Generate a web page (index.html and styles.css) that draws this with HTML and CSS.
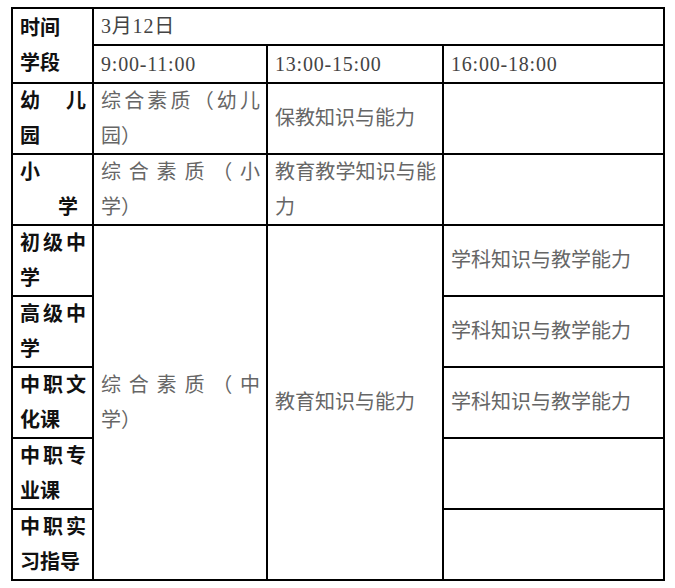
FILE: index.html
```html
<!DOCTYPE html>
<html lang="zh-CN">
<head>
<meta charset="utf-8">
<title>考试时间安排</title>
<link rel="stylesheet" href="styles.css">
</head>
<body>
<table class="exam">
  <colgroup>
    <col class="c1"><col class="c2"><col class="c3"><col class="c4">
  </colgroup>
  <tr class="rh1">
    <td rowspan="2" class="head">时间<br>学段</td>
    <td colspan="3" class="time">3月12日</td>
  </tr>
  <tr class="rh2">
    <td class="time">9:00-11:00</td>
    <td class="time">13:00-15:00</td>
    <td class="time">16:00-18:00</td>
  </tr>
  <tr class="row">
    <td class="head">幼 儿 园</td>
    <td class="subj">综合素质（幼儿园）</td>
    <td class="subj">保教知识与能力</td>
    <td></td>
  </tr>
  <tr class="row">
    <td class="head">小<br><span class="xue">学</span></td>
    <td class="subj">综合素质（小学）</td>
    <td class="subj">教育教学知识与能力</td>
    <td></td>
  </tr>
  <tr class="row">
    <td class="head">初级中学</td>
    <td rowspan="5" class="subj">综合素质（中学）</td>
    <td rowspan="5" class="subj">教育知识与能力</td>
    <td class="subj">学科知识与教学能力</td>
  </tr>
  <tr class="row">
    <td class="head">高级中学</td>
    <td class="subj">学科知识与教学能力</td>
  </tr>
  <tr class="row">
    <td class="head">中职文化课</td>
    <td class="subj">学科知识与教学能力</td>
  </tr>
  <tr class="row">
    <td class="head">中职专业课</td>
    <td></td>
  </tr>
  <tr class="row">
    <td class="head">中职实习指导</td>
    <td></td>
  </tr>
</table>
</body>
</html>
```

FILE: styles.css
```css
html, body {
  margin: 0;
  padding: 0;
  background: #fff;
}

body {
  font-family: "Liberation Serif", "Noto Sans CJK SC", serif;
  font-size: 20px;
  color: #333;
}

.exam {
  margin: 7px 0 0 11px;
  border-collapse: collapse;
  table-layout: fixed;
  width: 654px;
}

.c1 { width: 81px; }
.c2 { width: 174px; }
.c3 { width: 176px; }
.c4 { width: 221px; }

.exam td {
  border: 2px solid #000;
  padding: 0 6px 0 7px;
  line-height: 34.5px;
  text-align: justify;
  vertical-align: middle;
  word-break: normal;
  text-spacing-trim: space-all;
}

.rh1 { height: 37px; }
.rh2 { height: 38px; }
.row { height: 71px; }

.head {
  font-weight: 700;
  color: #111;
}

.time {
  color: #444;
  letter-spacing: 0.8px;
}

.subj {
  color: #666;
}

.xue {
  margin-left: 38px;
}
```
